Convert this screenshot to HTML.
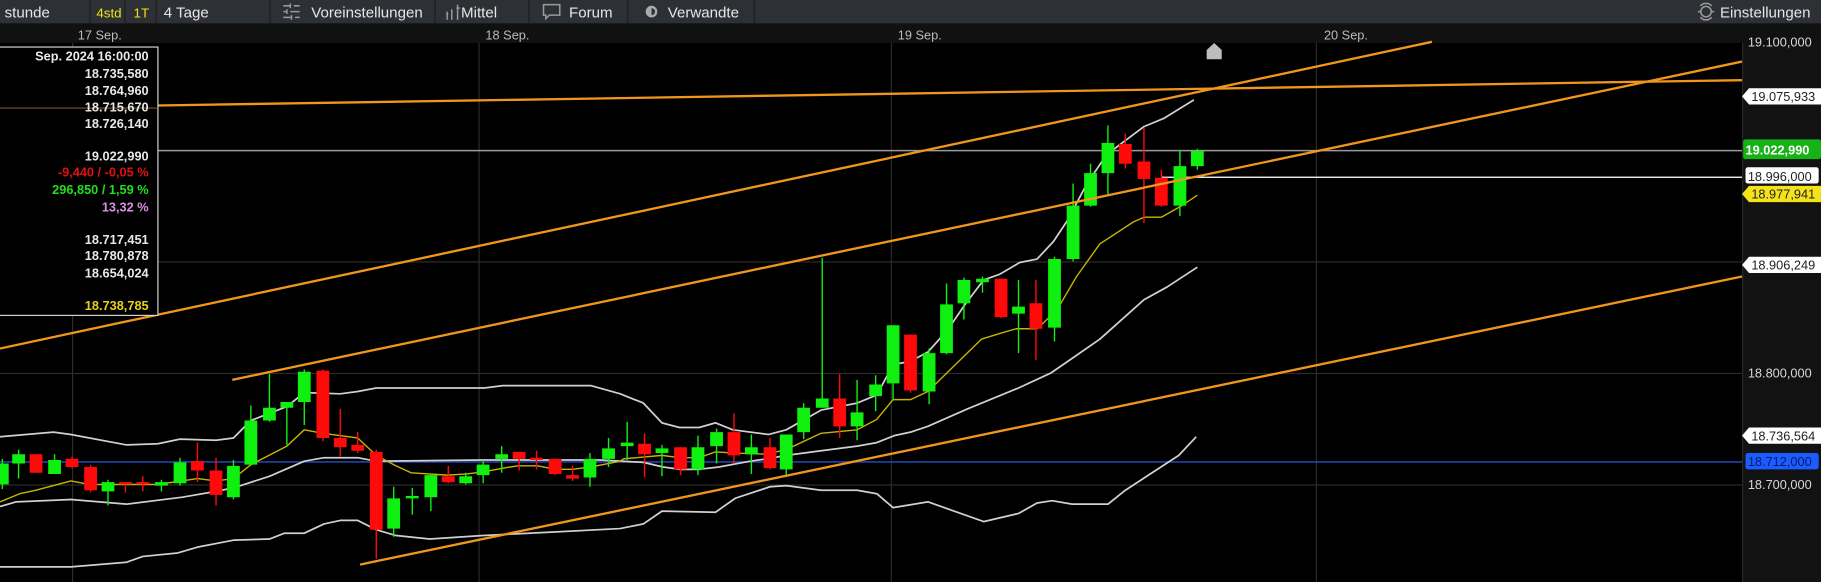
<!DOCTYPE html>
<html><head><meta charset="utf-8"><style>
html,body{margin:0;padding:0;background:#000;width:1821px;height:582px;overflow:hidden}
svg{display:block}
text{font-family:"Liberation Sans",Arial,sans-serif}
</style></head><body>
<svg width="1821" height="582" viewBox="0 0 1568 501" preserveAspectRatio="none" xmlns="http://www.w3.org/2000/svg">
<rect width="1568" height="501" fill="#000"/>
<rect x="0" y="0" width="1568" height="20" fill="#2d3135"/>
<rect x="0" y="20" width="1568" height="1" fill="#1a1c1e"/>
<g fill="#1b1d20">
<rect x="77" y="0" width="1" height="20"/><rect x="107" y="0" width="1" height="20"/><rect x="134" y="0" width="1" height="20"/>
<rect x="232" y="0" width="1" height="20"/><rect x="374" y="0" width="1" height="20"/><rect x="455" y="0" width="1" height="20"/>
<rect x="540" y="0" width="1" height="20"/><rect x="649" y="0" width="1" height="20"/>
</g>
<g font-size="13" fill="#e6e6e6">
<text x="4" y="15">stunde</text>
<text x="83" y="15" fill="#f2e21a" font-size="11.5">4std</text>
<text x="115" y="15" fill="#f2e21a" font-size="11.5">1T</text>
<text x="141" y="15">4 Tage</text>
<text x="268" y="15">Voreinstellungen</text>
<text x="397" y="15">Mittel</text>
<text x="490" y="15">Forum</text>
<text x="575" y="15">Verwandte</text>
<text x="1481" y="15">Einstellungen</text>
</g>
<g stroke="#9a9a9a" stroke-width="1.3" fill="none">
<path d="M244 5h6M253 5h5M244 10h3M250 10h8M244 15h7M254 15h4"/>
<path d="M250 3v4M247 8v4M251 13v4"/>
<path d="M385 10v7M389 8v9M394 4v13M386 12h-1M393 7h3"/>
<path d="M468 4h14v9h-9l-3 3v-3h-2z"/>
<path d="M1464 5l3 -2h4l3 2M1464 15l3 2h4l3-2M1462 10h2M1474 10h2"/>
<circle cx="1469" cy="10" r="4.5"/>
</g>
<circle cx="561" cy="10" r="5" fill="#aaa"/><path d="M561 7a3 3 0 0 1 0 6z" fill="#2d3135"/>
<rect x="0" y="21" width="1568" height="16" fill="#111"/>
<g font-size="11" fill="#bbb">
<text x="67" y="34">17 Sep.</text><text x="418" y="34">18 Sep.</text><text x="773" y="34">19 Sep.</text><text x="1140" y="34">20 Sep.</text>
</g>
<rect x="1500" y="37" width="68" height="464" fill="#121212"/>
<rect x="1500" y="37" width="1" height="464" fill="#2a2a2a"/>
<g fill="#2c2c2c">
<rect x="62" y="37" width="1" height="464"/><rect x="412" y="37" width="1" height="464"/>
<rect x="767" y="37" width="1" height="464"/><rect x="1133" y="37" width="1" height="464"/>
<rect x="0" y="225" width="1500" height="1"/><rect x="0" y="321" width="1500" height="1"/><rect x="0" y="417" width="1500" height="1"/>
</g>
<rect x="0" y="129" width="1500" height="1.3" fill="#9a9a9a"/>
<rect x="1000" y="152" width="500" height="1.2" fill="#f0f0f0"/>
<rect x="0" y="397" width="1500" height="1.3" fill="#2447b8"/>
<g fill="none" stroke-linejoin="round">
<polyline stroke="#d0d0d0" stroke-width="1.5" points="0,376 46,372 61,374 109,383 136,382 155,378 186,379 201,377 216,362 247,350 262,338 293,339 308,337 324,334 417,334 433,332 509,332 534,339 554,347 570,364 585,368 602,368 616,364 631,370 662,374 677,370 707,353 738,347 755,340 769,314 784,311 799,303 816,284 831,262 847,241 861,236 878,226 893,223 907,208 919,190 936,158 953,133 985,109 1002,102 1028,86"/>
<polyline stroke="#d0d0d0" stroke-width="1.5" points="0,436 14,432 61,430 109,434 157,428 186,423 201,420 232,410 262,397 279,394 308,394 324,397 417,396 517,396 554,398 571,402 585,404 602,404 619,402 646,397 660,395 677,392 707,388 738,384 755,381 770,375 784,372 799,367 833,352 877,334 905,321 921,310 947,292 985,258 1005,247 1031,230"/>
<polyline stroke="#d0d0d0" stroke-width="1.5" points="0,488 61,488 109,484 123,479 153,476 170,471 201,465 232,464 245,459 262,459 279,451 293,448 308,448 324,456 341,461 370,464 416,461 477,458 534,455 554,451 570,440 616,441 633,429 663,419 677,418 707,422 738,422 755,425 769,437 799,432 847,449 877,442 893,433 906,431 923,434 954,434 969,422 1015,392 1030,376"/>
<polyline stroke="#c8b400" stroke-width="1.2" points="0,432 17,425 31,422 61,414 77,417 136,417 170,412 186,414 201,412 216,400 247,384 262,370 278,373 308,377 324,392 341,401 354,407 385,409 402,408 417,406 433,403 446,401 463,401 478,404 493,404 509,402 534,397 537,395 570,392 585,394 602,394 616,389 633,390 660,391 677,387 707,373 738,370 755,361 769,344 784,344 799,337 845,292 861,287 875,283 893,283 910,267 927,238 947,210 976,191 985,187 1000,187 1016,178 1031,168"/>
</g>
<path stroke="#10f010" stroke-width="1.2" fill="none" d="M2 395V421M16 387V412M47 391V408M93 413V435M139 413V423M155 394V418M201 396V430M216 349V400M232 322V363M247 346V383M262 318V366M339 419V462M355 420V443M371 409V440M401 407V417M416 396V416M432 384V407M508 390V419M524 377V402M540 363V396M570 383V410M601 375V409M617 369V399M647 374V408M677 374V409M692 347V378M708 222V351M738 327V379M754 323V354M769 280V345M800 300V348M815 244V305M830 239V275M846 238V252M877 241V304M908 221V294M924 158V225M939 141V178M954 108V168M1016 129V186M1031 128V146"/>
<path fill="#10f010" d="M-3.5 399h11v18h-11zM10.5 391h11v8h-11zM41.5 396h11v12h-11zM87.5 415h11v8h-11zM133.5 415h11v3h-11zM149.5 398h11v18h-11zM195.5 401h11v27h-11zM210.5 362h11v38h-11zM226.5 351h11v11h-11zM241.5 346h11v5h-11zM256.5 320h11v26h-11zM333.5 429h11v26h-11zM349.5 427h11v2h-11zM365.5 409h11v19h-11zM395.5 410h11v6h-11zM410.5 400h11v9h-11zM426.5 391h11v4h-11zM502.5 395h11v16h-11zM518.5 386h11v9h-11zM534.5 381h11v3h-11zM564.5 386h11v4h-11zM595.5 385h11v19h-11zM611.5 372h11v12h-11zM641.5 385h11v6h-11zM671.5 374h11v30h-11zM686.5 351h11v21h-11zM702.5 343h11v8h-11zM732.5 355h11v12h-11zM748.5 331h11v10h-11zM763.5 280h11v50h-11zM794.5 304h11v33h-11zM809.5 262h11v42h-11zM824.5 241h11v20h-11zM840.5 240h11v3h-11zM871.5 264h11v6h-11zM902.5 223h11v59h-11zM918.5 177h11v46h-11zM933.5 149h11v28h-11zM948.5 123h11v26h-11zM1010.5 143h11v34h-11zM1025.5 130h11v13h-11z"/>
<path stroke="#ff0a0a" stroke-width="1.2" fill="none" d="M31 391V407M62 393V403M78 400V424M108 415V424M123 410V423M170 381V415M186 394V435M278 318V380M293 352V393M308 372V390M324 387V481M386 401V416M447 389V405M462 388V404M478 395V409M493 401V414M555 373V411M586 385V409M632 356V399M663 377V404M723 322V377M784 288V338M862 240V274M892 241V310M969 115V145M985 110V192M1000 146V178"/>
<path fill="#ff0a0a" d="M25.5 391h11v16h-11zM56.5 395h11v7h-11zM72.5 402h11v20h-11zM102.5 415h11v2h-11zM117.5 415h11v2h-11zM164.5 397h11v8h-11zM180.5 405h11v21h-11zM272.5 319h11v58h-11zM287.5 377h11v8h-11zM302.5 383h11v5h-11zM318.5 389h11v67h-11zM380.5 410h11v5h-11zM441.5 389h11v6h-11zM456.5 394h11v2h-11zM472.5 395h11v13h-11zM487.5 409h11v3h-11zM549.5 382h11v9h-11zM580.5 385h11v19h-11zM626.5 372h11v20h-11zM657.5 385h11v18h-11zM717.5 343h11v24h-11zM778.5 288h11v48h-11zM856.5 240h11v33h-11zM886.5 261h11v22h-11zM963.5 124h11v17h-11zM979.5 139h11v15h-11zM994.5 153h11v24h-11z"/>
<g stroke="#f0961c" stroke-width="2" fill="none">
<line x1="0" y1="93" x2="1500" y2="69"/>
<line x1="0" y1="300" x2="1233" y2="36"/>
<line x1="200" y1="327" x2="1500" y2="53"/>
<line x1="310" y1="486" x2="1500" y2="238"/>
</g>
<path d="M1039 51v-8l6.5-6 6.5 6v8z" fill="#bdbdbd"/>
<rect x="-2" y="40.5" width="138" height="231" fill="#000" stroke="#d8d8d8" stroke-width="1"/>
<line x1="0" y1="93" x2="135" y2="93" stroke="#7a5a20" stroke-width="1"/>
<g font-size="11" font-weight="bold" fill="#e8e8e8" text-anchor="end">
<text x="128" y="52">Sep. 2024 16:00:00</text>
<text x="128" y="67">18.735,580</text>
<text x="128" y="82">18.764,960</text>
<text x="128" y="96">18.715,670</text>
<text x="128" y="110">18.726,140</text>
<text x="128" y="138">19.022,990</text>
<text x="128" y="152" fill="#e01010">-9,440 / -0,05 %</text>
<text x="128" y="167" fill="#1ee01e">296,850 / 1,59 %</text>
<text x="128" y="182" fill="#d890e0">13,32 %</text>
<text x="128" y="210">18.717,451</text>
<text x="128" y="224">18.780,878</text>
<text x="128" y="239">18.654,024</text>
<text x="128" y="267" fill="#e6d21a">18.738,785</text>
</g>
<g font-size="11" fill="#d8d8d8">
<text x="1505" y="40">19.100,000</text>
<text x="1505" y="325">18.800,000</text>
<text x="1505" y="421">18.700,000</text>
</g>
<g font-size="11">
<path d="M1500 83l6-7h62v14h-62z" fill="#fff"/><text x="1508" y="87" fill="#222">19.075,933</text>
<rect x="1501" y="120" width="67" height="17" rx="2" fill="#16b316"/><text x="1503" y="133" fill="#fff" font-weight="bold">19.022,990</text>
<rect x="1503" y="144" width="63" height="14" rx="2" fill="#fff"/><text x="1505" y="156" fill="#222">18.996,000</text>
<path d="M1500 167l6-7h62v14h-62z" fill="#f5e21a"/><text x="1508" y="171" fill="#222">18.977,941</text>
<path d="M1500 228l6-7h62v14h-62z" fill="#fff"/><text x="1508" y="232" fill="#222">18.906,249</text>
<path d="M1500 375l6-7h62v14h-62z" fill="#fff"/><text x="1508" y="379" fill="#222">18.736,564</text>
<rect x="1503" y="390" width="63" height="14" rx="2" fill="#1a5cff"/><text x="1505" y="401" fill="#0a1a60">18.712,000</text>
</g>
</svg>
</body></html>
